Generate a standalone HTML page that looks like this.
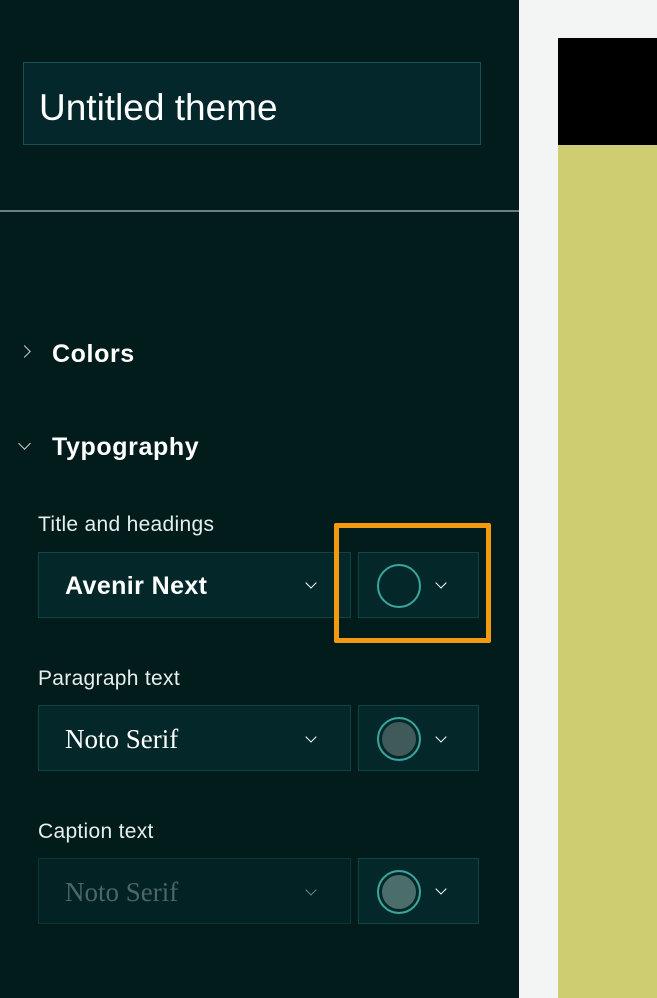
<!DOCTYPE html>
<html><head><style>
*{margin:0;padding:0;box-sizing:border-box}
body{width:657px;height:998px;overflow:hidden;background:#f3f4f4;font-family:"Liberation Sans",sans-serif;position:relative}
.panel{position:absolute;left:0;top:0;width:519px;height:998px;background:#021b1b}
.abs{position:absolute}
.box{position:absolute;background:#04282a;border:1.5px solid #0f4446}
.lbl{position:absolute;color:#e6eeee;font-size:21px;left:38px;letter-spacing:0.3px}
.chev{position:absolute;width:8px;height:8px;border-right:1.8px solid #fff;border-bottom:1.8px solid #fff;transform:rotate(45deg)}
.circ{position:absolute;width:44px;height:44px;border-radius:50%;border:2px solid #3aa59c}
</style></head><body>
<div class="panel">
 <div class="box" style="left:23px;top:62px;width:458px;height:83px;background:#03272a;border-color:#155052"></div>
 <div class="abs" style="left:39px;top:87px;color:#fff;font-size:37px">Untitled theme</div>
 <div class="abs" style="left:0;top:210px;width:519px;height:2px;background:#6b7f80"></div>
 <div class="abs" style="left:20px;top:347px;width:9px;height:9px;border-right:1.5px solid #ccc;border-bottom:1.5px solid #ccc;transform:rotate(-45deg)"></div>
 <div class="abs" style="left:52px;top:340px;color:#fff;font-size:25px;font-weight:bold;letter-spacing:0.6px">Colors</div>
 <div class="abs" style="left:20px;top:439px;width:9px;height:9px;border-right:1.5px solid #ccc;border-bottom:1.5px solid #ccc;transform:rotate(45deg)"></div>
 <div class="abs" style="left:52px;top:433px;color:#fff;font-size:25px;font-weight:bold;letter-spacing:0.6px">Typography</div>

 <div class="lbl" style="top:513px">Title and headings</div>
 <div class="box" style="left:38px;top:552px;width:313px;height:66px"></div>
 <div class="abs" style="left:65px;top:572px;color:#fff;font-size:25px;font-weight:bold;letter-spacing:0.4px">Avenir Next</div>
 <div class="chev" style="left:307px;top:579px"></div>
 <div class="box" style="left:358px;top:552px;width:121px;height:66px"></div>
 <div class="circ" style="left:377px;top:564px"></div>
 <div class="chev" style="left:437px;top:579px"></div>
 <div class="abs" style="left:334px;top:523px;width:157px;height:120px;border:5px solid #f49a12;border-radius:2px"></div>

 <div class="lbl" style="top:667px">Paragraph text</div>
 <div class="box" style="left:38px;top:705px;width:313px;height:66px"></div>
 <div class="abs" style="left:65px;top:724px;color:#fff;font-size:27px;font-family:'Liberation Serif',serif">Noto Serif</div>
 <div class="chev" style="left:307px;top:733px"></div>
 <div class="box" style="left:358px;top:705px;width:121px;height:66px"></div>
 <div class="circ" style="left:377px;top:717px;background:#3f5a59;box-shadow:inset 0 0 0 3px #04282a"></div>
 <div class="chev" style="left:437px;top:733px"></div>

 <div class="lbl" style="top:820px">Caption text</div>
 <div class="box" style="left:38px;top:858px;width:313px;height:66px;background:#032224;border-color:#0b3638"></div>
 <div class="abs" style="left:65px;top:877px;color:#4d6766;font-size:27px;font-family:'Liberation Serif',serif">Noto Serif</div>
 <div class="chev" style="left:307px;top:886px;border-color:#6f8584"></div>
 <div class="box" style="left:358px;top:858px;width:121px;height:66px"></div>
 <div class="circ" style="left:377px;top:870px;background:#4b6e6b;box-shadow:inset 0 0 0 3px #04282a"></div>
 <div class="chev" style="left:437px;top:885px"></div>
</div>
<div class="abs" style="left:558px;top:38px;width:99px;height:107px;background:#000"></div>
<div class="abs" style="left:558px;top:145px;width:99px;height:853px;background:#cfcd72"></div>
</body></html>
